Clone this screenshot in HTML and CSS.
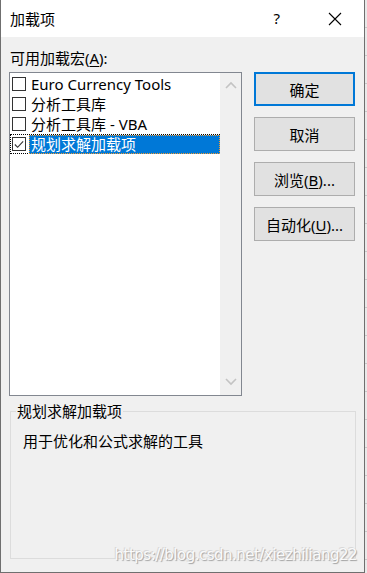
FILE: index.html
```html
<!DOCTYPE html>
<html lang="zh-CN">

<head>
	<meta charset="UTF-8">
	<meta name="viewport" content="width=device-width, initial-scale=1.0">
	<title>加载项</title>
	<link rel="stylesheet" href="styles.css">
</head>

<body>
	<div class="window">
		<div class="titlebar">
			<span class="title">加载项</span>
			<span class="help">?</span>
			<span class="close">
				<svg width="14" height="14" viewBox="0 0 14 14">
					<path d="M1 1 L13 13 M13 1 L1 13" stroke="#000" stroke-width="1.1" fill="none" />
				</svg>
			</span>
		</div>

		<div class="content">
			<div class="caption">可用加载宏(<u>A</u>):</div>

			<div class="main-row">
				<div class="listbox">
					<div class="items">
						<div class="item">
							<span class="check"></span>
							<span class="label">Euro Currency Tools</span>
						</div>
						<div class="item">
							<span class="check"></span>
							<span class="label">分析工具库</span>
						</div>
						<div class="item">
							<span class="check"></span>
							<span class="label">分析工具库 - VBA</span>
						</div>
						<div class="item selected">
							<span class="check">
								<svg width="13" height="13" viewBox="0 0 13 13">
									<path d="M2 6.5 L5 9.5 L11 3" stroke="#333" stroke-width="1.2" fill="none" />
								</svg>
							</span>
							<span class="label">规划求解加载项</span>
						</div>
					</div>
					<div class="scrollbar">
						<svg width="12" height="8" viewBox="0 0 12 8">
							<path d="M1 7 L6 2 L11 7" stroke="#c3c3c3" stroke-width="1.6" fill="none" />
						</svg>
						<svg width="12" height="8" viewBox="0 0 12 8">
							<path d="M1 1 L6 6 L11 1" stroke="#c3c3c3" stroke-width="1.6" fill="none" />
						</svg>
					</div>
				</div>

				<div class="buttons">
					<button class="btn default">确定</button>
					<button class="btn">取消</button>
					<button class="btn">浏览(<u>B</u>)...</button>
					<button class="btn">自动化(<u>U</u>)...</button>
				</div>
			</div>

			<fieldset class="group">
				<legend>规划求解加载项</legend>
				<div class="desc">用于优化和公式求解的工具</div>
			</fieldset>
		</div>

		<div class="watermark">https://blog.csdn.net/xiezhiliang22</div>
	</div>
</body>

</html>
```

FILE: styles.css
```css
* {
	box-sizing: border-box;
	font-family: "Noto Sans", "Noto Sans CJK SC", sans-serif;
}

body {
	margin: 0;
	width: 367px;
	height: 573px;
	overflow: hidden;
	background: #e9e9e9;
	background-image: repeating-linear-gradient(to bottom, #e9e9e9 0, #e9e9e9 27px, #c8c8c8 27px, #c8c8c8 28px);
}

.window {
	position: relative;
	width: 365px;
	height: 573px;
	background: #f0f0f0;
	border: 1px solid #6f6f6f;
	border-top: none;
	display: flex;
	flex-direction: column;
	color: #000;
	font-size: 15px;
}

.titlebar {
	height: 37px;
	background: #fff;
	display: flex;
	align-items: center;
	padding-left: 9px;
	flex-shrink: 0;
}

.title {
	flex: 1;
	font-size: 15px;
}

.help {
	font-size: 15px;
	margin-right: 48px;
	margin-top: -2px;
}

.close {
	display: flex;
	margin-right: 22px;
}

.content {
	padding: 13px 9px 0 8px;
	display: flex;
	flex-direction: column;
}

.caption {
	height: 22px;
	line-height: 16px;
	padding-left: 1px;
}

u {
	text-decoration-thickness: 1px;
	text-underline-offset: 2px;
}

.main-row {
	display: flex;
	gap: 12px;
	align-items: flex-start;
}

.listbox {
	width: 233px;
	height: 324px;
	border: 1px solid #828790;
	background: #fff;
	display: flex;
}

.items {
	flex: 1;
	padding-top: 1px;
}

.item {
	height: 20px;
	display: flex;
	align-items: center;
	border: 1px dotted transparent;
}

.check {
	width: 14px;
	height: 14px;
	margin-left: 1px;
	border: 1px solid #333;
	background: #fff;
	display: flex;
	align-items: center;
	justify-content: center;
}

.label {
	height: 19px;
	line-height: 18px;
	padding-left: 2px;
	margin-left: 3px;
	white-space: nowrap;
}

.item.selected {
	border-color: #000;
	border-right: none;
}

.item.selected .label {
	flex: 1;
	margin-top: -1px;
	margin-bottom: -1px;
	background: #0078d7;
	color: #fff;
	border: 1px dotted #f59b2e;
	padding-left: 1px;
	line-height: 16px;
}

.scrollbar {
	width: 21px;
	background: #f0f0f0;
	display: flex;
	flex-direction: column;
	justify-content: space-between;
	align-items: center;
	padding: 8px 0 9px;
}

.buttons {
	display: flex;
	flex-direction: column;
	gap: 11px;
}

.btn {
	width: 101px;
	height: 34px;
	background: #e1e1e1;
	border: 1px solid #adadad;
	font-size: 15px;
	color: #000;
	padding: 0;
}

.btn.default {
	border: 2px solid #0078d7;
}

.group {
	margin: 6px 0 0 1px;
	width: 346px;
	height: 157px;
	border: 1px solid #dcdcdc;
	padding: 0 0 0 12px;
}

.group legend {
	padding: 0 1px;
	margin-left: -7px;
	line-height: 18px;
}

.desc {
	margin-top: 10px;
}

.watermark {
	position: absolute;
	right: 7px;
	bottom: 8px;
	font-family: "DejaVu Sans", sans-serif;
	font-size: 15px;
	letter-spacing: -0.5px;
	color: #fafafa;
	text-shadow: 1px 1px 1px #a0a0a0, -1px -1px 0 #d8d8d8;
}
```
